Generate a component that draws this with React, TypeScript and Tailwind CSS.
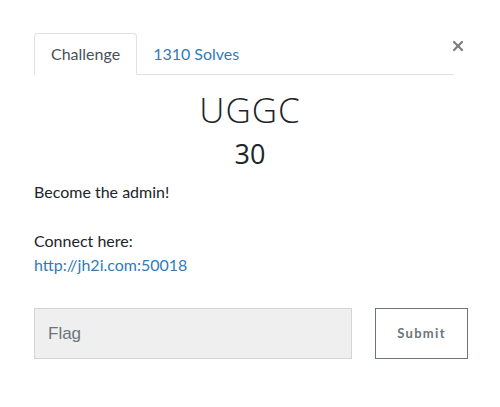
import { X } from "lucide-react";

export default function App() {
  return (
    <div className="w-[500px] h-[407px] bg-white relative font-['Lato',sans-serif] text-[#212529]">
      <button className="absolute right-[34px] top-[38px] text-[#7b7b7b]">
        <X size={16} strokeWidth={3.2} />
      </button>
      <div className="pt-[33px] pl-[34px]">
        <div className="w-[420px] flex border-b border-[#dee2e6] h-[42px]">
          <div className="px-[16px] flex items-center border border-[#dee2e6] border-b-white rounded-t-[4px] -mb-px bg-white text-[16px] text-[#495057]">
            Challenge
          </div>
          <div className="px-[16px] flex items-center text-[16px] text-[#337ab7]">
            1310 Solves
          </div>
        </div>
        <div className="w-[432px] flex flex-col items-center mt-[14px]">
          <div className="font-['Open_Sans',sans-serif] font-light text-[35px] leading-[42px] tracking-[1px] text-[#212529]">
            UGGC
          </div>
          <div className="mt-[6px] font-['Open_Sans',sans-serif] text-[27px] leading-[34px] text-[#212529]">
            30
          </div>
        </div>
        <div className="mt-[9px] text-[16px] leading-[24px]">
          <p>Become the admin!</p>
          <p className="mt-[25px]">Connect here:</p>
          <a className="text-[#337ab7]">http://jh2i.com:50018</a>
        </div>
        <div className="mt-[31px] flex gap-[23px]">
          <div className="w-[318px] h-[51px] bg-[#efefef] border border-[#d1d5db] flex items-center pl-[13px] font-['Liberation_Sans',sans-serif] text-[17px] text-[#6c757d]">
            Flag
          </div>
          <button className="w-[93px] h-[51px] border border-[#6c757d] text-[13px] font-bold tracking-[1.3px] text-[#6c757d]">
            Submit
          </button>
        </div>
      </div>
    </div>
  );
}
